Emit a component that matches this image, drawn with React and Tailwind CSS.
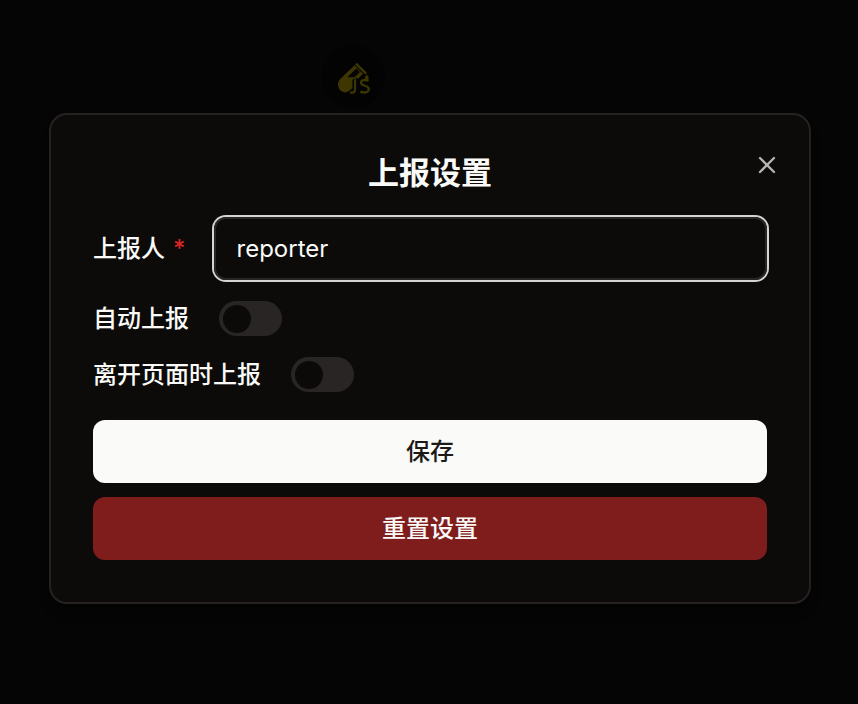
import { X } from "lucide-react";

function ScriptLogo() {
  return (
    <svg viewBox="0 0 34 36" className="h-9 w-[34px]" fill="none" stroke="#3d3600" aria-hidden="true">
      <path d="M17.6 6.2 3.2 20C-.3 23.8.8 29 3.4 31.6c2.6 2.4 6.6 2.4 9.1 0l3.3-2.6V20.4l6-2 3.7-3.8Z" fill="#3d3600" stroke="none" />
      <path d="m10.2 18.2 9.2-8.8 3.4 3.5-5.2 5.3Z" fill="#040404" stroke="none" />
      <path d="m18.9 4.6 10.2 10" strokeWidth="2.5" />
      <path d="m20.2 18.8 4.8-4.8" strokeWidth="2.6" />
      <path d="M18.1 20.2v9.8c0 3.2-2 4.2-4.8 3.4" stroke="#040404" strokeWidth="5" />
      <path d="M18.1 20.2v9.8c0 3.2-2 4.2-5.2 3.4" strokeWidth="2.2" />
      <path d="M31.6 21.8c-3.7-1.5-7.6-.9-7.6 2 0 3.7 7.8 2.2 7.8 6.2 0 3.6-4.6 4.3-8.6 2.6" strokeWidth="2.3" />
      <path d="M29.8 15.8c2.6 2.7 2.4 4.6.4 4.9-2.4 0-3.2-2.4-.4-4.9Z" fill="#3d3600" stroke="none" />
    </svg>
  );
}

function SwitchRow({ id, label }) {
  return (
    <div className="flex items-center gap-[30px]">
      <label htmlFor={id} className="leading-[35px]">{label}</label>
      <input
        id={id}
        type="checkbox"
        role="switch"
        className="relative h-[35px] w-[63px] shrink-0 appearance-none rounded-full bg-[#292524] before:absolute before:top-1 before:left-1 before:size-7 before:rounded-full before:bg-[#0c0a09] checked:bg-[#fafaf9] checked:before:left-8"
      />
    </div>
  );
}

export default function App() {
  return (
    <main className="min-h-screen bg-[#050505] pt-[45px] pr-[47px] pl-[49px] font-[Inter,'Noto_Sans_CJK_SC',sans-serif] text-2xl font-medium text-[#fafaf9]">
      <div className="flex justify-center pr-[153px]">
        <div className="flex size-[63px] items-center justify-center rounded-full bg-[#030303]">
          <ScriptLogo />
        </div>
      </div>
      <section
        role="dialog"
        aria-labelledby="dialog-title"
        className="relative mt-[5px] rounded-[18px] border-2 border-[#252221] bg-[#0c0b09] p-[42px] shadow-lg"
      >
        <h2 id="dialog-title" className="mb-7 text-center text-[31px] leading-8 font-semibold">上报设置</h2>
        <button type="button" aria-label="关闭" className="absolute top-9 right-7 text-[#b5b4b2]">
          <X size={28} strokeWidth={2} />
        </button>
        <form onSubmit={(event) => event.preventDefault()}>
          <div className="flex items-center gap-7">
            <label htmlFor="reporter" className="flex shrink-0 items-center gap-2">
              上报人 <span className="text-[#dc2626]">*</span>
            </label>
            <input
              id="reporter"
              type="text"
              required
              defaultValue="reporter"
              className="h-[63px] min-w-0 flex-1 rounded-xl border-2 border-[#292524] bg-transparent px-[21px] font-normal ring-2 ring-[#d6d3d1] outline-none"
            />
          </div>
          <div className="my-[21px]"><SwitchRow id="auto-report" label="自动上报" /></div>
          <div className="mb-7"><SwitchRow id="leave-report" label="离开页面时上报" /></div>
          <div className="flex flex-col gap-[14px]">
            <button type="submit" className="h-[63px] rounded-xl bg-[#fafaf9] text-[#1c1917]">保存</button>
            <button type="reset" className="h-[63px] rounded-xl bg-[#7f1d1d]">重置设置</button>
          </div>
        </form>
      </section>
    </main>
  );
}
